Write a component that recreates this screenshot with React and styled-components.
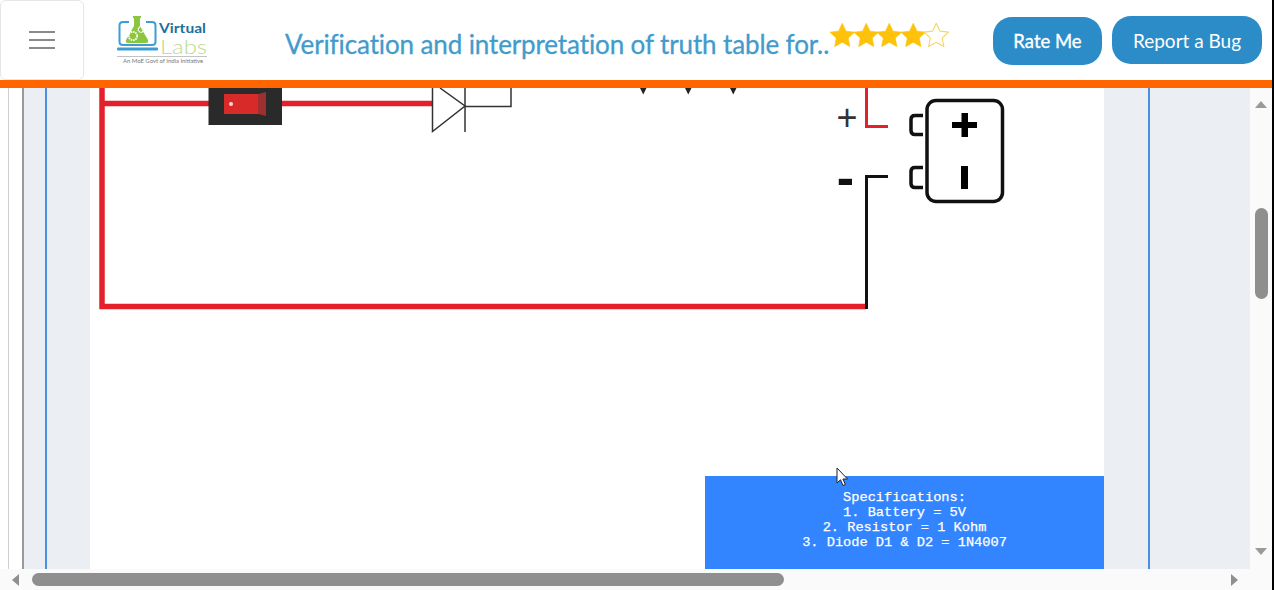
import React from "react";
import styled, { createGlobalStyle } from "styled-components";

const Global = createGlobalStyle`
  html, body { margin: 0; padding: 0; background: #fff; overflow: hidden; }
  * { box-sizing: border-box; }
`;

const Page = styled.div`
  width: 1274px;
  height: 590px;
  display: flex;
  overflow: hidden;
  background: #000;
  font-family: Lato, "Open Sans", sans-serif;
`;
const Main = styled.div`
  width: 1272px;
  height: 590px;
  display: flex;
  flex-direction: column;
  background: #fff;
`;
const Header = styled.header`
  flex: none;
  height: 88px;
  display: flex;
  align-items: center;
  border-bottom: 8px solid #ff6600;
  background: #fff;
`;
const MenuButton = styled.button`
  flex: none;
  width: 84px;
  height: 80px;
  padding: 0;
  display: flex;
  flex-direction: column;
  align-items: center;
  justify-content: center;
  gap: 6px;
  background: #fff;
  border: 1px solid #e6e6e6;
  border-radius: 6px;
`;
const MenuBar = styled.span`
  width: 26px;
  height: 2px;
  background: #8a8a8a;
`;
const LogoSvg = styled.svg`
  flex: none;
  width: 92px;
  height: 50px;
  margin-left: 32px;
`;
const Title = styled.h1`
  margin: 7px 0 0 77px;
  flex: none;
  width: 545px;
  font-size: 26px;
  font-weight: 400;
  line-height: 32px;
  letter-spacing: -0.12px;
  white-space: nowrap;
  color: #429bcb;
  -webkit-text-stroke: 0.3px #429bcb;
`;
const Stars = styled.div`
  flex: none;
  display: flex;
  gap: 0;
  margin-bottom: 10px;
`;
const StarSlot = styled.svg`
  flex: none;
  width: 23.5px;
  height: 24px;
  overflow: visible;
`;
const Actions = styled.div`
  margin-left: auto;
  padding-right: 10px;
  display: flex;
  align-items: center;
  gap: 10px;
`;
const ActionButton = styled.button`
  height: 48px;
  width: ${(p) => p.$width}px;
  margin-top: ${(p) => p.$drop}px;
  padding: 0;
  border: 0;
  border-radius: 19px;
  background: #2b8cc7;
  color: #fff;
  font-family: Lato, "Open Sans", sans-serif;
  font-size: ${(p) => p.$size}px;
  font-weight: 400;
  -webkit-text-stroke: ${(p) => p.$stroke}px #fff;
`;
const Body = styled.div`
  flex: 1;
  min-height: 0;
  display: flex;
  padding-left: 8px;
`;
const OuterFrame = styled.div`
  flex: none;
  width: 16px;
  border-left: 1px solid #cfcfcf;
  border-right: 2px solid #9a9a9a;
`;
const SidePanel = styled.div`
  flex: none;
  width: ${(p) => p.$width}px;
  padding-left: ${(p) => p.$lineAt}px;
  background: #ebeef2;
`;
const BlueLine = styled.div`
  width: 2px;
  height: 100%;
  background: #4a8fe0;
`;
const Canvas = styled.main`
  flex: none;
  width: 1014px;
  position: relative;
  display: flex;
  flex-direction: column;
  background: #fff;
`;
const Circuit = styled.svg`
  flex: none;
  display: block;
  width: 1014px;
  height: 388px;
`;
const SpecBox = styled.div`
  flex: 1;
  width: 399px;
  margin-left: auto;
  padding-top: 14px;
  background: #3385ff;
  color: #fff;
  font-family: "Liberation Mono", monospace;
  font-size: 13.65px;
  line-height: 15px;
  text-align: center;
  white-space: pre-line;
  -webkit-text-stroke: 0.25px #fff;
`;
const Cursor = styled.svg`
  position: absolute;
  left: 746px;
  top: 379px;
  width: 13px;
  height: 20px;
`;
const VScrollbar = styled.div`
  flex: none;
  width: 22px;
  display: flex;
  flex-direction: column;
  align-items: center;
  padding: 13px 0 14px 0;
  background: #fafafa;
`;
const VThumb = styled.div`
  width: 13px;
  height: 91px;
  margin-top: 100px;
  border-radius: 7px;
  background: #8f8f8f;
`;
const ArrowUp = styled.div`
  width: 0;
  height: 0;
  border-left: 6.5px solid transparent;
  border-right: 6.5px solid transparent;
  border-bottom: 7px solid #9a9a9a;
`;
const ArrowDown = styled.div`
  width: 0;
  height: 0;
  margin-top: auto;
  border-left: 6.5px solid transparent;
  border-right: 6.5px solid transparent;
  border-top: 7px solid #9a9a9a;
`;
const HScrollbar = styled.div`
  flex: none;
  height: 21px;
  display: flex;
  align-items: center;
  padding: 0 34px 0 12px;
  background: #fafafa;
`;
const ArrowLeft = styled.div`
  width: 0;
  height: 0;
  border-top: 6.5px solid transparent;
  border-bottom: 6.5px solid transparent;
  border-right: 7px solid #8f8f8f;
`;
const ArrowRight = styled.div`
  width: 0;
  height: 0;
  margin-left: auto;
  border-top: 6.5px solid transparent;
  border-bottom: 6.5px solid transparent;
  border-left: 7px solid #8f8f8f;
`;
const HThumb = styled.div`
  width: 752px;
  height: 13px;
  margin-left: 13px;
  border-radius: 7px;
  background: #8f8f8f;
`;

const STAR = "M12 1.5l3.2 6.9 7.5.9-5.5 5.1 1.4 7.4L12 18.1l-6.6 3.7 1.4-7.4L1.3 9.3l7.5-.9z";

function Star({ filled }) {
  return (
    <StarSlot viewBox="1.3 1.5 20.5 20.5">
      <path
        d={STAR}
        fill={filled ? "#fdc209" : "none"}
        stroke={filled ? "#fdc209" : "#f7d768"}
        strokeWidth={filled ? 0.6 : 1}
        strokeLinejoin="round"
      />
    </StarSlot>
  );
}

function Logo() {
  return (
    <LogoSvg viewBox="116 14 92 50">
      <path d="M129 21h-6q-3.500 0-3.500 3.500v16q0 3.500 3.500 3.500h29q3.500 0 3.500-3.500v-16q0-3.500-3.500-3.500h-6" fill="none" stroke="#3c9dd3" strokeWidth="2" />
      <rect x="117" y="46.500" width="41" height="3" rx="1" fill="#3c9dd3" />
      <rect x="133" y="15" width="8" height="2" fill="#8cc63f" />
      <path d="M134 16h6v9l8 14q1 3-2 3h-18q-3 0-2-3l8-14z" fill="#8cc63f" />
      <circle cx="133" cy="35" r="4.200" fill="none" stroke="#fff" strokeWidth="1.800" strokeDasharray="1.600 .8" />
      <circle cx="141" cy="28.500" r="2.800" fill="none" stroke="#fff" strokeWidth="1.400" strokeDasharray="1.200 .6" />
      <text x="159" y="32" fontFamily="Lato, sans-serif" fontSize="14" fontWeight="700" fill="#1f6f9e" textLength="47" lengthAdjust="spacingAndGlyphs">Virtual</text>
      <text x="160" y="52.500" fontFamily="Lato, sans-serif" fontSize="20" fontWeight="300" fill="#b7da8f" textLength="47" lengthAdjust="spacingAndGlyphs">Labs</text>
      <rect x="117" y="55" width="90" height="0.800" fill="#b5b5b5" />
      <text x="123" y="62" fontFamily="Lato, sans-serif" fontSize="5.500" fill="#777" textLength="80" lengthAdjust="spacingAndGlyphs">An MoE Govt of India Initiative</text>
    </LogoSvg>
  );
}

function CircuitDrawing() {
  return (
    <Circuit viewBox="90 88 1014 388">
      <g fill="none" stroke="#e5202d" strokeWidth="5.500">
        <path d="M102 88V306.500H866" />
        <path d="M102 103.500H210" />
        <path d="M281 103.500H432" />
      </g>

      <rect x="208.500" y="88" width="73.500" height="37" fill="#2a2a2a" />
      <path d="M258 94l8-2v24l-8-2z" fill="#9e2f30" />
      <rect x="224" y="94" width="34" height="20" fill="#d92a2a" />
      <circle cx="231" cy="104" r="2" fill="#ffd6d6" />

      <g fill="none" stroke="#333" strokeWidth="1.500">
        <path d="M432.500 88V131.500L465 106L440 88" />
        <path d="M465 88V132" />
        <path d="M465 106.500H511V88" />
      </g>

      <g fill="#222">
        <path d="M640 88h6.500l-3.250 6.500z" />
        <path d="M685 88h6.500l-3.250 6.500z" />
        <path d="M730 88h6.500l-3.250 6.500z" />
      </g>

      <path d="M866.500 88V126.500H888" fill="none" stroke="#e5202d" strokeWidth="3" />
      <path d="M866.500 309V176.500H888" fill="none" stroke="#111" strokeWidth="3" />

      <text x="847" y="130" textAnchor="middle" fontFamily="Liberation Sans, sans-serif" fontSize="36" fill="#333">+</text>
      <text x="845.500" y="195" textAnchor="middle" fontFamily="Liberation Sans, sans-serif" fontSize="52" fontWeight="700" fill="#111">-</text>

      <rect x="927" y="100.500" width="75.500" height="101" rx="9" fill="none" stroke="#111" strokeWidth="3.500" />
      <path d="M923 115.500H915q-4 0-4 4v11q0 4 4 4H923" fill="none" stroke="#111" strokeWidth="3.500" />
      <path d="M923 167.500H915q-4 0-4 4v12q0 4 4 4H923" fill="none" stroke="#111" strokeWidth="3.500" />
      <rect x="952" y="122" width="25" height="6" fill="#000" />
      <rect x="961.500" y="113" width="6.500" height="24" fill="#000" />
      <rect x="961" y="166" width="7" height="23" fill="#000" />
    </Circuit>
  );
}

export default function App() {
  return (
    <Page>
      <Global />
      <Main>
        <Header>
          <MenuButton aria-label="Menu">
            <MenuBar />
            <MenuBar />
            <MenuBar />
          </MenuButton>
          <Logo />
          <Title>Verification and interpretation of truth table for..</Title>
          <Stars>
            <Star filled />
            <Star filled />
            <Star filled />
            <Star filled />
            <Star />
          </Stars>
          <Actions>
            <ActionButton $width={109} $drop={2} $size={18.5} $stroke={0.35}>Rate Me</ActionButton>
            <ActionButton $width={150} $drop={0} $size={19} $stroke={0}>Report a Bug</ActionButton>
          </Actions>
        </Header>
        <Body>
          <OuterFrame />
          <SidePanel $width={66} $lineAt={21}>
            <BlueLine />
          </SidePanel>
          <Canvas>
            <CircuitDrawing />
            <SpecBox>{"Specifications:\n1. Battery = 5V\n2. Resistor = 1 Kohm\n3. Diode D1 & D2 = 1N4007"}</SpecBox>
            <Cursor viewBox="0 0 13 20">
              <path d="M1 1v15l3.500-3.200 2.500 5.700 2.400-1-2.500-5.500h4.600z" fill="#fff" stroke="#222" strokeWidth="1" />
            </Cursor>
          </Canvas>
          <SidePanel $width={146} $lineAt={44}>
            <BlueLine />
          </SidePanel>
          <VScrollbar>
            <ArrowUp />
            <VThumb />
            <ArrowDown />
          </VScrollbar>
        </Body>
        <HScrollbar>
          <ArrowLeft />
          <HThumb />
          <ArrowRight />
        </HScrollbar>
      </Main>
    </Page>
  );
}
